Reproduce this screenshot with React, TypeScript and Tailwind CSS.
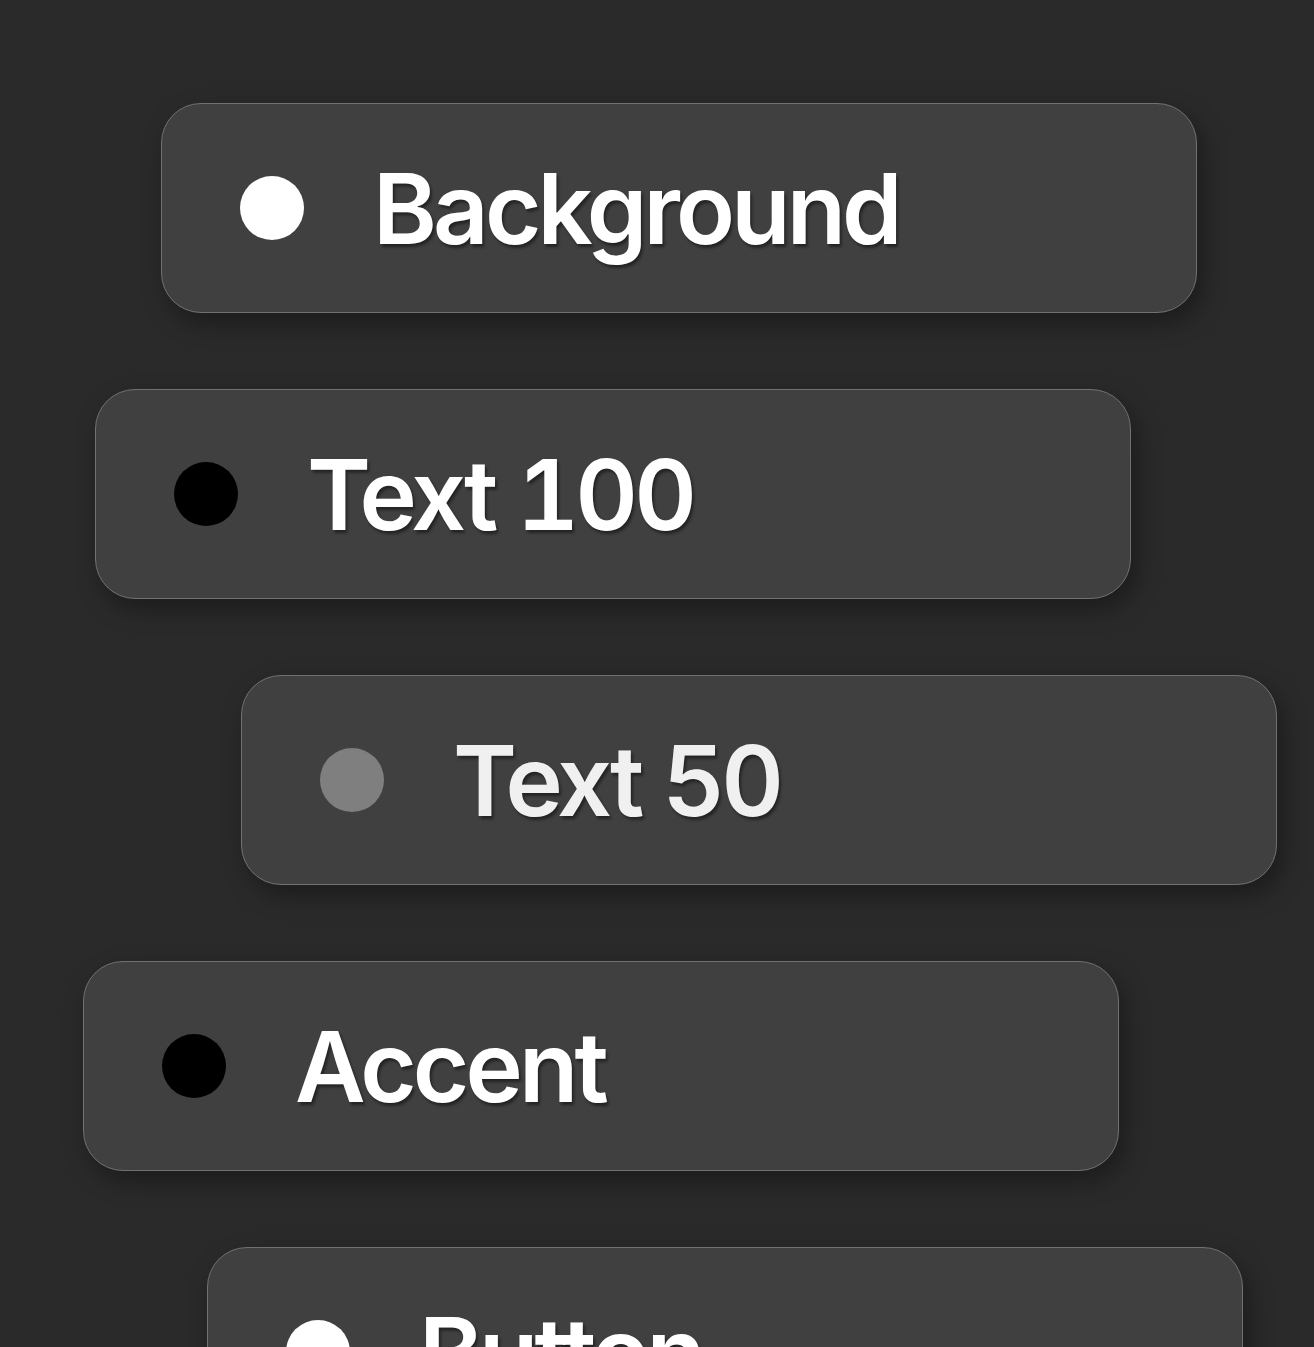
import React from "react";

type Item = { label: string; dot: string; ml: string; text: string };

const items: Item[] = [
  { label: "Background", dot: "bg-white", ml: "ml-[161px]", text: "text-white" },
  { label: "Text 100", dot: "bg-black", ml: "ml-[95px]", text: "text-white" },
  { label: "Text 50", dot: "bg-[#7f7f7f]", ml: "ml-[241px]", text: "text-[#f0f0f0]" },
  { label: "Accent", dot: "bg-black", ml: "ml-[83px]", text: "text-white" },
  { label: "Button", dot: "bg-white", ml: "ml-[207px]", text: "text-white" },
];

export default function App() {
  return (
    <div className="w-[1314px] h-[1347px] overflow-hidden bg-[#2a2a2a] pt-[103px] flex flex-col gap-[76px] [font-family:Inter,'Liberation_Sans',sans-serif]">
      {items.map((it) => (
        <div
          key={it.label}
          className={`${it.ml} shrink-0 w-[1036px] h-[210px] rounded-[40px] bg-[#404040] border border-[#717171] shadow-[6px_10px_24px_rgba(0,0,0,0.35)] flex items-center pl-[78px]`}
        >
          <div className={`w-[64px] h-[64px] rounded-full ${it.dot} shrink-0`} />
          <div
            className={`ml-[69px] text-[97px] leading-none font-semibold tracking-[-0.04em] tabular-nums ${it.text} [text-shadow:2px_3px_3px_rgba(0,0,0,0.45)]`}
          >
            {it.label}
          </div>
        </div>
      ))}
    </div>
  );
}
